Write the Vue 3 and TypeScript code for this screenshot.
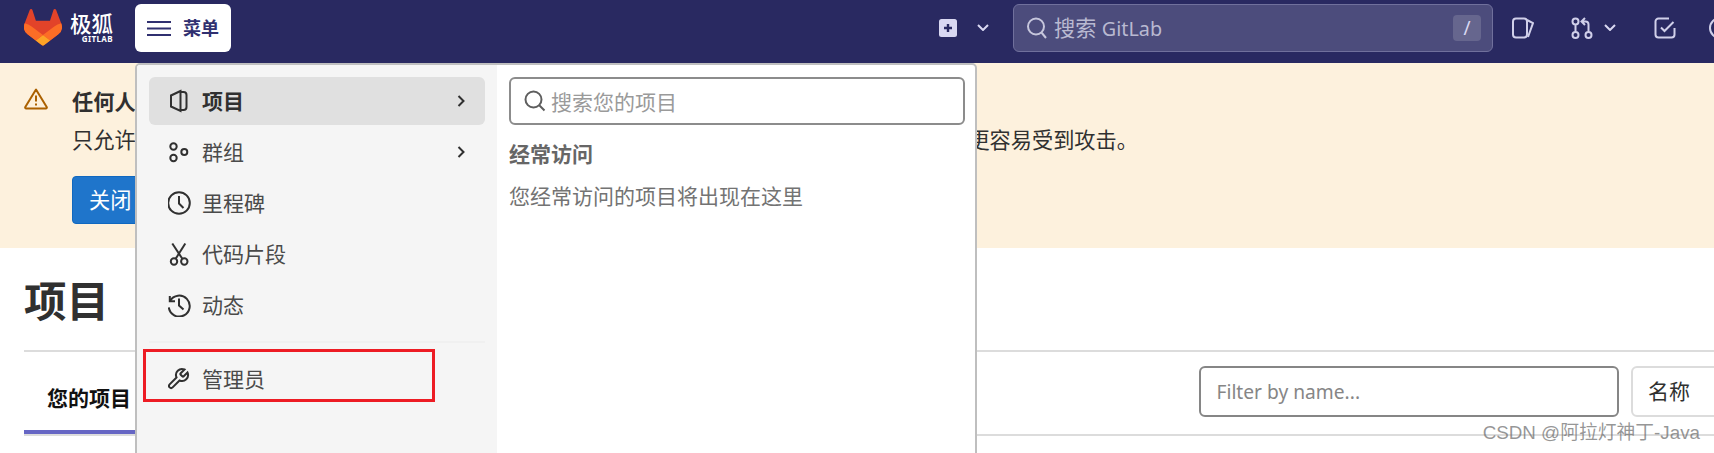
<script setup lang="ts">
interface NavItem {
  label: string
  paths: string[]
  box?: string
  chevron?: boolean
  active?: boolean
}

const circle = (cx: number, cy: number, r: number): string =>
  `M${cx - r} ${cy}a${r} ${r} 0 1 0 ${2 * r} 0a${r} ${r} 0 1 0 ${-2 * r} 0Z`

const navItems: NavItem[] = [
  {
    label: '项目',
    active: true,
    chevron: true,
    paths: ['M12.5 2 3 6.5V17.5L12.5 22Z', 'M12.5 3H15.5A3 3 0 0 1 18.5 6V18A3 3 0 0 1 15.5 21H12.5'],
  },
  {
    label: '群组',
    chevron: true,
    paths: [circle(5.5, 6.5, 3.2), circle(5.5, 18, 3.2), circle(16.3, 12, 3)],
  },
  {
    label: '里程碑',
    paths: [circle(11, 12, 10.8), 'M11 5V12.5L15.5 17'],
  },
  {
    label: '代码片段',
    paths: [circle(6, 19.5, 3.2), circle(16.3, 19.5, 3.2), 'M4.3 1.5 14.5 17', 'M17.3 1.5 7.5 17'],
  },
  {
    label: '动态',
    paths: ['M1.8 3V8.2H7', 'M2 8A10.5 10.5 0 1 1 .8 14.5', 'M11 5.5V12.5L15.5 16.5'],
  },
]

const adminItem: NavItem = {
  label: '管理员',
  box: '2 0 24 24',
  paths: [
    'M14.7 6.3a1 1 0 0 0 0 1.4l1.6 1.6a1 1 0 0 0 1.4 0l3.77-3.77a6 6 0 0 1-7.94 7.94l-6.91 6.91a2.12 2.12 0 0 1-3-3l6.91-6.91a6 6 0 0 1 7.94-7.94l-3.76 3.76z',
  ],
}
</script>

<template>
  <div class="page">
    <header class="topbar">
      <div class="brand">
        <svg class="tanuki" viewBox="0 0 25 24" aria-hidden="true">
          <path fill="#E24329" d="m24.507 9.5-.034-.09L21.082.562a.896.896 0 0 0-1.694.091l-2.29 7.01H7.825L5.535.653a.898.898 0 0 0-1.694-.09L.451 9.411.416 9.5a6.297 6.297 0 0 0 2.09 7.278l.012.01.03.022 5.16 3.867 2.56 1.935 1.554 1.176a1.051 1.051 0 0 0 1.268 0l1.555-1.176 2.56-1.935 5.197-3.89.014-.01A6.297 6.297 0 0 0 24.507 9.5Z" />
          <path fill="#FC6D26" d="m24.507 9.5-.034-.09a11.44 11.44 0 0 0-4.56 2.051l-7.447 5.632 4.742 3.584 5.197-3.89.014-.01A6.297 6.297 0 0 0 24.507 9.5Z" />
          <path fill="#FCA326" d="m7.707 20.677 2.56 1.935 1.555 1.176a1.051 1.051 0 0 0 1.268 0l1.555-1.176 2.56-1.935-4.743-3.584-4.755 3.584Z" />
          <path fill="#FC6D26" d="M5.01 11.461a11.43 11.43 0 0 0-4.56-2.05L.416 9.5a6.297 6.297 0 0 0 2.09 7.278l.012.01.03.022 5.16 3.867 4.745-3.584-7.444-5.632Z" />
        </svg>
        <div class="wordmark">
          <span class="wordmark-cn">极狐</span>
          <span class="wordmark-en">GITLAB</span>
        </div>
      </div>

      <button class="menu-btn" type="button">
        <svg class="burger" viewBox="0 0 24 16" aria-hidden="true">
          <path d="M0 2H24M0 8.5H24M0 15H24" />
        </svg>
        <span>菜单</span>
      </button>

      <div class="bar-right">
        <svg class="plus" viewBox="0 0 18 18" aria-hidden="true">
          <rect width="18" height="18" rx="2.5" fill="#d9d8f2" />
          <path d="M9 5V13M5 9H13" stroke="#292961" stroke-width="2.4" />
        </svg>
        <svg class="chev plus-chev" viewBox="0 0 12 7" aria-hidden="true"><path d="M1 1 6 6 11 1" /></svg>

        <div class="global-search">
          <svg class="search-ico" viewBox="0 0 22 24" aria-hidden="true">
            <path d="M2 10.5a8 8 0 1 0 16 0a8 8 0 1 0-16 0ZM15.5 16.5 20 22" />
          </svg>
          <span class="global-search-text"><span class="cjk-wide">搜索</span> <span class="latin-narrow">GitLab</span></span>
          <kbd class="slash">/</kbd>
        </div>

        <svg class="bar-ico issue" viewBox="0 0 22 22" aria-hidden="true">
          <rect x="1" y="1.5" width="14" height="19" rx="3" />
          <path d="M15 3 21 6 16 20" />
        </svg>
        <svg class="bar-ico mr" viewBox="0 0 22 22" aria-hidden="true">
          <path d="M1.500 4.500a3 3 0 1 0 6 0a3 3 0 1 0-6 0ZM1.500 18a3 3 0 1 0 6 0a3 3 0 1 0-6 0ZM14.500 18a3 3 0 1 0 6 0a3 3 0 1 0-6 0ZM4.500 7.500V15M17.500 15V7.500a3 3 0 0 0-3-3H11M14 1 10.500 4.500 14 8" />
        </svg>
        <svg class="chev mr-chev" viewBox="0 0 12 7" aria-hidden="true"><path d="M1 1 6 6 11 1" /></svg>
        <svg class="bar-ico todo" viewBox="0 0 22 22" aria-hidden="true">
          <path d="M15 1.500H4.500a3 3 0 0 0-3 3V17.500a3 3 0 0 0 3 3H17.500a3 3 0 0 0 3-3V11" />
          <path d="M7 10.500 10.500 14 19.500 5" />
        </svg>
        <svg class="bar-ico help" viewBox="0 0 22 22" aria-hidden="true">
          <circle cx="11" cy="11" r="10" />
        </svg>
      </div>
    </header>

    <section class="banner">
      <svg class="warn" viewBox="0 0 24 22" aria-hidden="true">
        <path d="M12 1.500 1.300 19a1 1 0 0 0 .9 1.500H21.800a1 1 0 0 0 .9-1.500Z" />
        <path d="M12 7.500V13.500M12 15.500V17.500" />
      </svg>
      <div class="banner-body">
        <h4 class="banner-title">任何人都可以注册帐户</h4>
        <p class="banner-text">只允许您信任的用户注册帐户，并在创建帐户前先由管理员审核。公开注册会使您的 GitLab实例更容易受到攻击。</p>
        <button class="banner-btn" type="button">关闭 注册</button>
      </div>
    </section>

    <main class="content">
      <h1 class="page-title">项目</h1>
      <div class="tabs-row">
        <div class="tab">您的项目</div>
        <div class="filters">
          <div class="filter-input">Filter by name...</div>
          <div class="sort-box">名称</div>
        </div>
      </div>
    </main>

    <div class="dropdown">
      <nav class="side">
        <a v-for="item in navItems" :key="item.label" class="side-item" :class="{ active: item.active }">
          <svg class="side-ico" :viewBox="item.box ?? '0 0 24 24'" aria-hidden="true">
            <path v-for="d in item.paths" :key="d" :d="d" />
          </svg>
          <span class="side-label">{{ item.label }}</span>
          <svg v-if="item.chevron" class="side-chev" viewBox="0 0 8 12" aria-hidden="true"><path d="M1.500 1 6.500 6 1.500 11" /></svg>
        </a>
        <div class="side-sep"></div>
        <a class="side-item">
          <svg class="side-ico" :viewBox="adminItem.box" aria-hidden="true">
            <path v-for="d in adminItem.paths" :key="d" :d="d" />
          </svg>
          <span class="side-label">{{ adminItem.label }}</span>
        </a>
        <div class="red-mark"></div>
      </nav>
      <div class="panel">
        <div class="panel-search">
          <svg class="panel-search-ico" viewBox="0 0 22 22" aria-hidden="true">
            <path d="M1.500 9.500a8 8 0 1 0 16 0a8 8 0 1 0-16 0ZM15.500 15.500 20.500 20.500" />
          </svg>
          <span>搜索您的项目</span>
        </div>
        <div class="panel-heading">经常访问</div>
        <div class="panel-empty">您经常访问的项目将出现在这里</div>
      </div>
    </div>

    <div class="watermark">CSDN @阿拉灯神丁-Java</div>
  </div>
</template>

<style>
html,
body {
  margin: 0;
  padding: 0;
  background: #fff;
}
</style>

<style scoped>
.page {
  position: relative;
  width: 1714px;
  height: 453px;
  overflow: hidden;
  font-family: "Noto Sans", "Noto Sans CJK SC", sans-serif;
  font-size: 21px;
  color: #303030;
  background: #fff;
}

/* top bar */
.topbar {
  display: flex;
  align-items: center;
  height: 63px;
  padding: 0 0 8px 24px;
  box-sizing: border-box;
  background: #292961;
}
.topbar > * {
  flex: none;
}
.brand {
  display: flex;
  align-items: center;
  width: 111px;
}
.tanuki {
  width: 38px;
  height: 36.500px;
  flex: none;
}
.wordmark {
  display: flex;
  flex-direction: column;
  align-items: flex-end;
  margin-left: 8px;
  color: #fff;
}
.wordmark-cn {
  font-size: 21.500px;
  line-height: 23px;
  font-weight: 500;
}
.wordmark-en {
  font-size: 8px;
  line-height: 8px;
  font-weight: 700;
  letter-spacing: 0.4px;
}
.menu-btn {
  display: flex;
  align-items: center;
  gap: 12px;
  width: 96px;
  height: 48px;
  margin-left: 0;
  padding: 0 0 0 12px;
  border: 0;
  border-radius: 6px;
  background: #fff;
  color: #303070;
  font: 700 18px/1 "Noto Sans", "Noto Sans CJK SC", sans-serif;
}
.burger {
  width: 24px;
  height: 16px;
  fill: none;
  stroke: #303070;
  stroke-width: 2;
}
.bar-right {
  display: flex;
  align-items: center;
  margin-left: 708px;
  height: 48px;
  color: #d9d8f2;
}
.bar-right > * {
  flex: none;
}
.plus {
  width: 18px;
  height: 18px;
}
.chev {
  width: 12px;
  height: 7px;
  fill: none;
  stroke: #d9d8f2;
  stroke-width: 2;
}
.plus-chev {
  margin-left: 20px;
}
.global-search {
  display: flex;
  align-items: center;
  width: 480px;
  height: 48px;
  margin-left: 24px;
  padding: 0 11px 0 12px;
  box-sizing: border-box;
  border: 1.500px solid #70709c;
  border-radius: 6px;
  background: #4c4c7c;
}
.search-ico {
  width: 22px;
  height: 24px;
  flex: none;
  fill: none;
  stroke: #c6c6dc;
  stroke-width: 2;
}
.global-search-text {
  margin-left: 6px;
  color: #b9b9d1;
  line-height: 1;
}
.cjk-wide {
  font-size: 21.200px;
}
.latin-narrow {
  font-size: 19.800px;
}
.slash {
  margin-left: auto;
  width: 28px;
  height: 26px;
  border-radius: 4px;
  background: #66668e;
  color: #d9d8f2;
  font: 400 19px/26px "Noto Sans", sans-serif;
  text-align: center;
}
.bar-ico {
  width: 22px;
  height: 22px;
  fill: none;
  stroke: #d1d0ea;
  stroke-width: 2;
}
.issue {
  margin-left: 19px;
}
.mr {
  margin-left: 37px;
}
.mr-chev {
  margin-left: 11px;
}
.todo {
  margin-left: 38px;
}
.help {
  margin-left: 33px;
}

/* alert */
.banner {
  display: flex;
  height: 185px;
  padding: 25px 0 0 24px;
  box-sizing: border-box;
  background: #fdf1dd;
}
.warn {
  flex: none;
  width: 24px;
  height: 22px;
  fill: none;
  stroke: #ab6100;
  stroke-width: 2;
  stroke-linejoin: round;
}
.banner-body {
  margin-left: 24px;
  margin-top: 0;
}
.banner-title {
  margin: 0;
  font-size: 21.200px;
  line-height: 28px;
  font-weight: 700;
  color: #303030;
}
.banner-text {
  margin: 10px 0 0;
  font-size: 21.200px;
  line-height: 28px;
  color: #303030;
}
.banner-btn {
  display: block;
  width: 120px;
  height: 48px;
  margin-top: 22px;
  padding: 0 0 0 16px;
  border: 1px solid #1068bf;
  border-radius: 4px;
  background: #1f75cb;
  color: #fff;
  text-align: left;
  white-space: nowrap;
  font: 400 21.200px/1 "Noto Sans", "Noto Sans CJK SC", sans-serif;
}

/* page body */
.content {
  padding-left: 24px;
}
.page-title {
  height: 104px;
  margin: 0;
  box-sizing: border-box;
  border-bottom: 2px solid #dcdcdc;
  font-size: 42.500px;
  line-height: 58px;
  padding-top: 24px;
  font-weight: 700;
  color: #303030;
}
.tabs-row {
  display: flex;
  align-items: flex-start;
  justify-content: space-between;
  height: 84px;
  box-sizing: border-box;
  border-bottom: 2px solid #dcdcdc;
}
.tab {
  height: 82px;
  width: 130px;
  padding: 32px 0 0 23px;
  box-sizing: border-box;
  border-bottom: 4px solid #6666c4;
  font-size: 21px;
  line-height: 28px;
  font-weight: 700;
  color: #111;
}
.filters {
  flex: none;
  display: flex;
  gap: 12px;
  padding-top: 14px;
  margin-right: -27px;
}
.filter-input {
  width: 420px;
  height: 51px;
  padding-left: 15.500px;
  box-sizing: border-box;
  border: 2px solid #868686;
  border-radius: 6px;
  color: #868686;
  font-size: 19.200px;
  line-height: 47px;
}
.sort-box {
  width: 110px;
  height: 51px;
  padding-left: 15px;
  box-sizing: border-box;
  border: 2px solid #dcdcdc;
  border-radius: 6px;
  color: #303030;
  line-height: 47px;
}

/* menu dropdown */
.dropdown {
  position: absolute;
  left: 135px;
  top: 63px;
  display: flex;
  width: 842px;
  height: 400px;
  box-sizing: border-box;
  border: 2px solid #bfbfbf;
  border-radius: 5px 5px 0 0;
  background: #fff;
  overflow: hidden;
}
.side {
  position: relative;
  flex: none;
  display: flex;
  flex-direction: column;
  gap: 3px;
  width: 360px;
  padding: 12px 12px 0;
  box-sizing: border-box;
  background: #f5f5f5;
}
.side-item {
  display: flex;
  align-items: center;
  height: 48px;
  padding: 0 20px 0 19px;
  box-sizing: border-box;
  border-radius: 6px;
  color: #4a4a4a;
}
.side-item.active {
  background: #e0e0e0;
  font-weight: 700;
  color: #303030;
}
.side-label {
  padding-bottom: 2px;
}
.side-ico {
  flex: none;
  width: 24px;
  height: 24px;
  margin-right: 10px;
  fill: none;
  stroke: #303030;
  stroke-width: 2;
}
.side-chev {
  width: 8px;
  height: 12px;
  margin-left: auto;
  fill: none;
  stroke: #303030;
  stroke-width: 2;
}
.side-sep {
  height: 2px;
  margin: 9px 0 9px;
  background: #f0f0f0;
}
.red-mark {
  position: absolute;
  left: 6px;
  top: 284px;
  width: 292px;
  height: 53px;
  box-sizing: border-box;
  border: 3px solid #ed1c24;
}
.panel {
  flex: 1;
  padding: 12px 10px 0 12px;
}
.panel-search {
  display: flex;
  align-items: center;
  height: 48px;
  padding-left: 13px;
  box-sizing: border-box;
  border: 2px solid #8c8c8c;
  border-radius: 6px;
  color: #9a9a9a;
}
.panel-search-ico {
  flex: none;
  width: 22px;
  height: 22px;
  margin-right: 5px;
  fill: none;
  stroke: #5e5e5e;
  stroke-width: 2;
}
.panel-heading {
  margin-top: 15px;
  font-weight: 700;
  line-height: 28px;
  color: #666;
}
.panel-empty {
  margin-top: 14px;
  line-height: 28px;
  color: #737373;
}

.watermark {
  position: absolute;
  right: 14px;
  top: 422px;
  font-family: "Liberation Sans", "Noto Sans CJK SC", sans-serif;
  font-size: 18.800px;
  line-height: 22px;
  color: rgba(110, 110, 110, 0.72);
}
</style>
